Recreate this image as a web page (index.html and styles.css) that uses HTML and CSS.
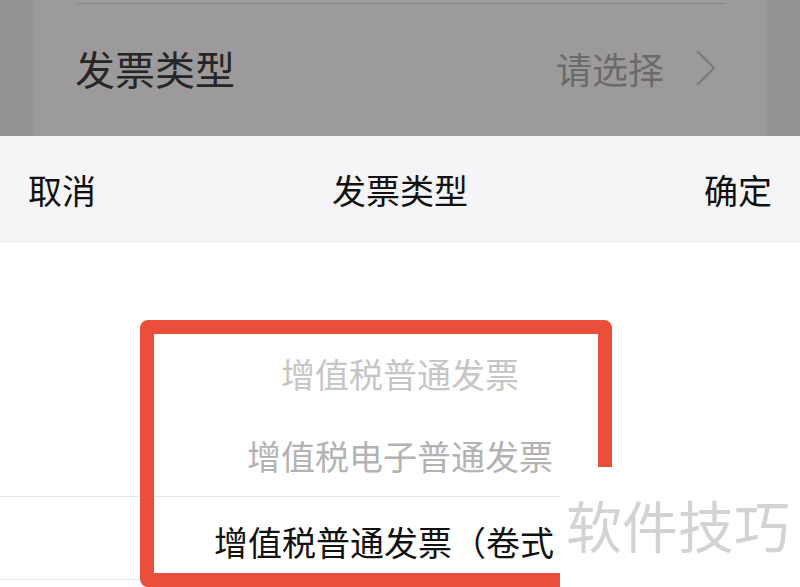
FILE: index.html
```html
<!DOCTYPE html>
<html lang="zh-CN">
<head>
<meta charset="utf-8">
<title>发票类型</title>
<link rel="stylesheet" href="styles.css">
</head>
<body>
<div class="page">
  <div class="backdrop">
    <div class="strip"></div>
    <div class="card">
      <div class="card-line"></div>
      <div class="field">
        <span class="field-label">发票类型</span>
        <span class="field-value">请选择
          <svg class="chevron" width="22" height="36" viewBox="0 0 22 36"><path d="M2 1 L19 18 L2 35" fill="none" stroke="#7a797a" stroke-width="2.2"/></svg>
        </span>
      </div>
    </div>
    <div class="strip"></div>
  </div>
  <div class="sheet">
    <div class="sheet-head">
      <span class="head-btn">取消</span>
      <span class="head-title">发票类型</span>
      <span class="head-btn">确定</span>
    </div>
    <div class="picker">
      <div class="row row-far"><span>增值税普通发票</span></div>
      <div class="row row-near"><span>增值税电子普通发票</span></div>
      <div class="row row-selected"><span>增值税普通发票（卷式<span class="paren">）</span></span></div>
    </div>
  </div>
  <div class="highlight"></div>
  <div class="watermark">软件技巧</div>
</div>
</body>
</html>
```

FILE: styles.css
```css
html, body {
  margin: 0;
  padding: 0;
}
body {
  font-family: "Noto Sans CJK SC", "Noto Sans", sans-serif;
  background: #ffffff;
}
.page {
  position: relative;
  width: 800px;
  height: 587px;
  overflow: hidden;
  display: flex;
  flex-direction: column;
}
.backdrop {
  height: 136px;
  display: flex;
  background: #969495;
}
.strip {
  width: 33px;
  background: #959394;
}
.card {
  flex: 1;
  background: #9c9a9b;
  padding: 3px 42px 0 43px;
  display: flex;
  flex-direction: column;
}
.card-line {
  height: 1px;
  background: #8a8889;
}
.field {
  display: flex;
  justify-content: space-between;
  align-items: center;
  height: 128px;
}
.field-label {
  font-size: 40px;
  line-height: 1;
  color: #262626;
  margin-left: -1px;
}
.field-value {
  display: flex;
  align-items: center;
  gap: 31px;
  font-size: 36px;
  line-height: 1;
  color: #6b6a6b;
  margin-right: 8px;
}
.chevron {
  display: block;
}
.sheet {
  flex: 1;
  display: flex;
  flex-direction: column;
}
.sheet-head {
  height: 107px;
  background: #f5f4f6;
  display: flex;
  justify-content: space-between;
  align-items: center;
  padding: 0 28px;
}
.head-btn, .head-title {
  font-size: 34px;
  line-height: 1;
  color: #111111;
}
.picker {
  flex: 1;
  background: #ffffff;
  padding-top: 89px;
}
.row {
  display: flex;
  justify-content: center;
  align-items: center;
  font-size: 34px;
  line-height: 1;
}
.row-far {
  height: 84px;
  color: #c6c6c6;
}
.row-near {
  height: 80px;
  color: #b3b3b3;
}
.row-selected {
  height: 84px;
  box-sizing: border-box;
  border-top: 1px solid #e6e6e6;
  border-bottom: 1px solid #e6e6e6;
  padding: 8px 0 0 10px;
  color: #111111;
}
.paren {
  margin-left: 8px;
}
.highlight {
  position: absolute;
  left: 140px;
  top: 320px;
  width: 472px;
  height: 267px;
  box-sizing: border-box;
  border: 14px solid #e94f3b;
  border-radius: 8px;
}
.watermark {
  position: absolute;
  left: 560px;
  top: 467px;
  right: 0;
  bottom: 0;
  background: #ffffff;
  color: #d3d3d3;
  font-size: 56px;
  line-height: 1;
  padding: 29px 0 0 6px;
}
```
